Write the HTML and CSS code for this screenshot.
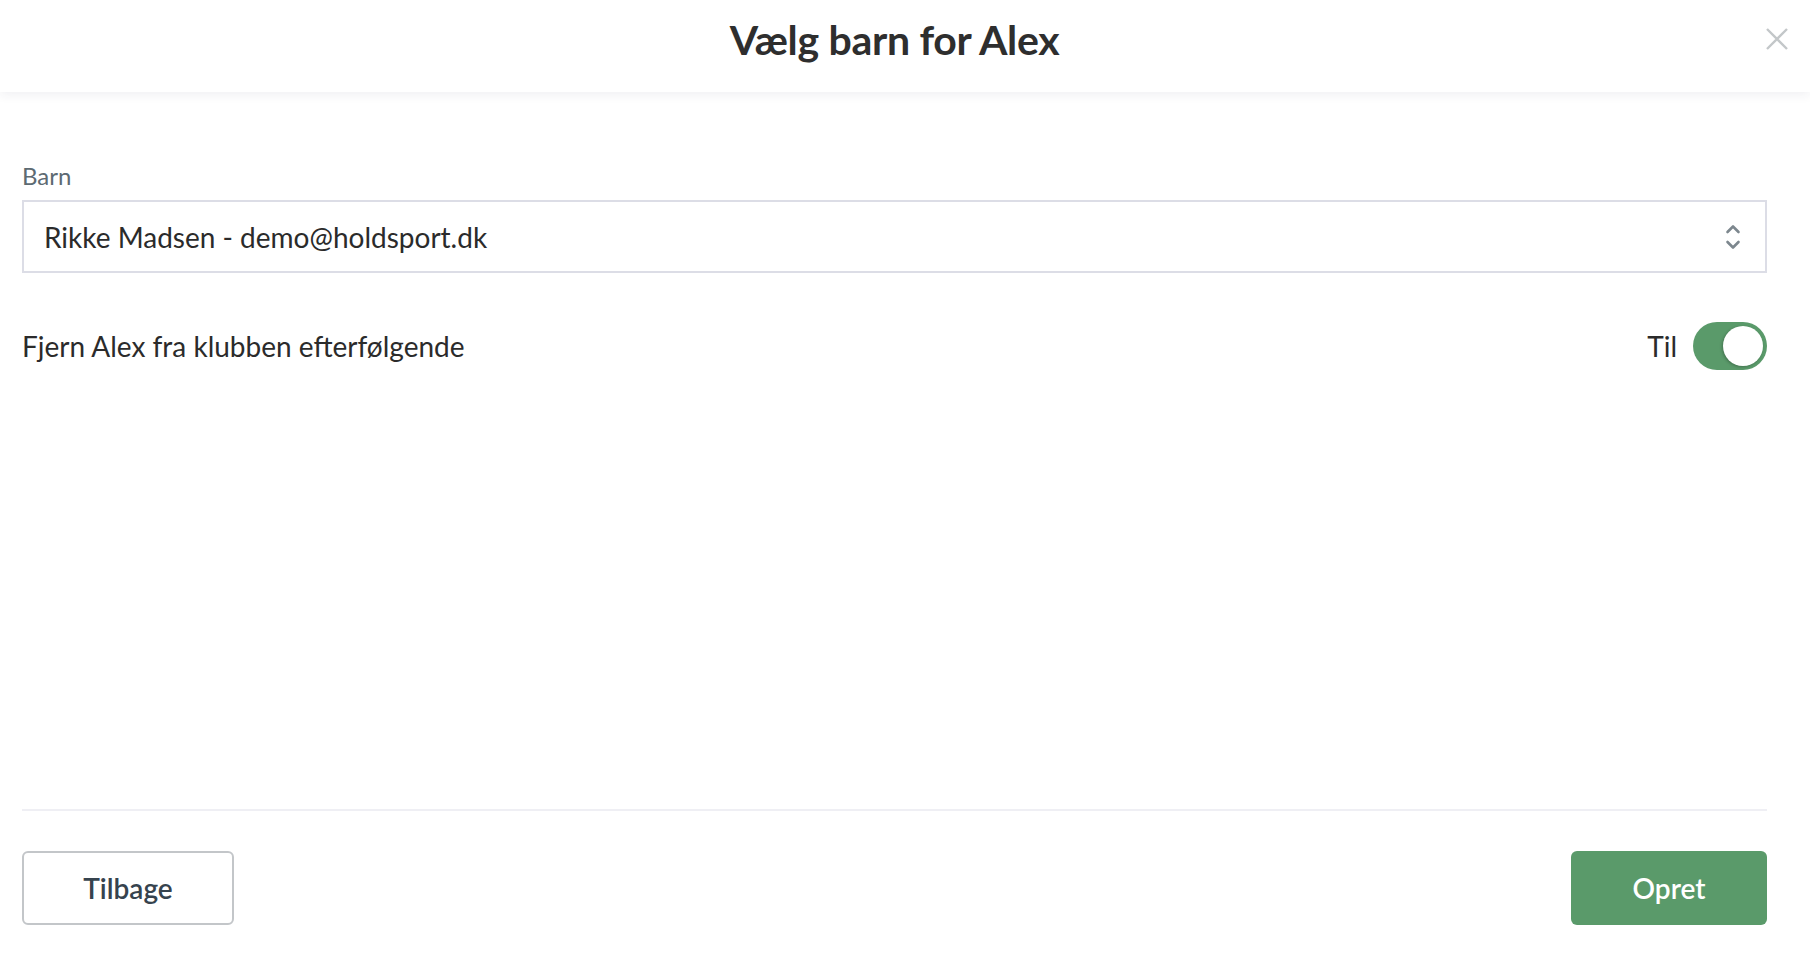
FILE: index.html
```html
<!DOCTYPE html>
<html lang="da">
<head>
<meta charset="utf-8">
<title>Vælg barn for Alex</title>
<link rel="stylesheet" href="styles.css">
</head>
<body>
<div class="modal">
  <header class="modal-header">
    <div class="header-inner">
      <h1 class="title">Vælg barn for Alex</h1>
      <button class="close" aria-label="Luk">
        <svg width="24" height="24" viewBox="0 0 24 24"><path d="M2 2 L22 22 M22 2 L2 22" stroke="#c3c7c9" stroke-width="2.4" fill="none"/></svg>
      </button>
    </div>
  </header>
  <main class="modal-body">
    <div class="field">
      <label class="field-label">Barn</label>
      <div class="select">
        <span class="select-value">Rikke Madsen - demo@holdsport.dk</span>
        <svg class="chevrons" width="16" height="28" viewBox="0 0 16 28"><path d="M2.5 9 L8 3.5 L13.5 9" stroke="#7d878e" stroke-width="2.6" fill="none" stroke-linecap="round" stroke-linejoin="round"/><path d="M2.5 19 L8 24.5 L13.5 19" stroke="#7d878e" stroke-width="2.6" fill="none" stroke-linecap="round" stroke-linejoin="round"/></svg>
      </div>
    </div>
    <div class="toggle-row">
      <span class="toggle-label">Fjern Alex fra klubben efterfølgende</span>
      <div class="toggle-wrap">
        <span class="toggle-state">Til</span>
        <span class="switch"><span class="knob"></span></span>
      </div>
    </div>
    <div class="spacer"></div>
    <footer class="modal-footer">
      <button class="btn btn-secondary">Tilbage</button>
      <button class="btn btn-primary">Opret</button>
    </footer>
  </main>
</div>
</body>
</html>
```

FILE: styles.css
```css
* { box-sizing: border-box; }
html, body { margin: 0; padding: 0; height: 100%; background: #fff; }
body { font-family: Lato, "Open Sans", sans-serif; color: #2b2b2b; }

.modal { height: 954px; display: flex; flex-direction: column; }

.modal-header {
  height: 92px;
  background: #fff;
  box-shadow: 0 3px 10px rgba(40, 40, 80, 0.07);
  position: relative;
  z-index: 1;
  flex: none;
}
.header-inner {
  width: 1789px;
  height: 100%;
  display: flex;
  align-items: center;
  justify-content: center;
  position: relative;
}
.title {
  margin: 0;
  font-size: 41px;
  font-weight: 700;
  color: #2e2e2e;
  letter-spacing: -0.3px;
  margin-top: -14px;
}
.close {
  position: absolute;
  right: 0;
  top: 27px;
  width: 24px;
  height: 24px;
  padding: 0;
  border: 0;
  background: none;
}
.close svg { display: block; }

.modal-body {
  flex: 1;
  width: 1789px;
  padding: 0 22px;
  display: flex;
  flex-direction: column;
}

.field { margin-top: 70px; }
.field-label {
  display: block;
  font-size: 24px;
  color: #5d6a72;
  margin-bottom: 10px;
  line-height: 28px;
}
.select {
  height: 73px;
  border: 2px solid #dcdde6;
  display: flex;
  align-items: center;
  justify-content: space-between;
  padding: 0 24px 0 20px;
}
.select-value { font-size: 28px; color: #2b2b2b; }
.chevrons { display: block; }

.toggle-row {
  margin-top: 49px;
  display: flex;
  align-items: center;
  justify-content: space-between;
}
.toggle-label { font-size: 28px; color: #2b2b2b; }
.toggle-wrap { display: flex; align-items: center; gap: 16px; }
.toggle-state { font-size: 28px; color: #2b2b2b; }
.switch {
  width: 74px;
  height: 48px;
  border-radius: 24px;
  background: #5a9a6a;
  position: relative;
  display: block;
}
.knob {
  position: absolute;
  right: 4px;
  top: 4px;
  width: 40px;
  height: 40px;
  border-radius: 50%;
  background: #fff;
  box-shadow: -1px 1px 3px rgba(0,0,0,0.25);
}

.spacer { flex: 1; }

.modal-footer {
  border-top: 2px solid #efeff4;
  padding: 40px 0 29px;
  display: flex;
  justify-content: space-between;
}
.btn {
  height: 74px;
  border-radius: 6px;
  font-family: Lato, sans-serif;
  font-size: 28px;
  font-weight: 600;
  cursor: pointer;
}
.btn-secondary {
  width: 212px;
  background: #fff;
  border: 2px solid #c3c6c9;
  color: #36434e;
}
.btn-primary {
  width: 196px;
  background: #5a9a6a;
  border: 0;
  color: #fff;
}
```
